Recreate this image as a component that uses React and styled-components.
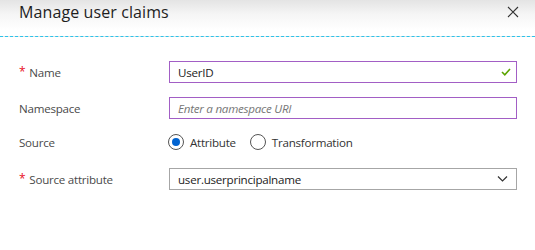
import React from "react";
import styled, { createGlobalStyle } from "styled-components";

const Global = createGlobalStyle`
  html, body { margin: 0; padding: 0; background: #fff; }
  body { font-family: "Open Sans", "Noto Sans", sans-serif; color: #333; }
`;

const Page = styled.div`
  width: 535px;
  height: 250px;
  background: #fff;
  overflow: hidden;
`;

const Header = styled.div`
  height: 37px;
  display: flex;
  align-items: flex-start;
  justify-content: space-between;
  padding: 0 16px 0 19px;
  box-sizing: border-box;
  background: linear-gradient(to bottom, #e4e4e4 0px, #f5f5f5 14px, #ffffff 30px);
  border-bottom: 1px dashed #2cc3ea;
`;

const Title = styled.h1`
  margin: 0;
  padding-top: 1px;
  font-size: 16px;
  font-weight: 400;
  color: #1e1e1e;
  line-height: 22px;
  letter-spacing: 0.1px;
`;

const Close = styled.button`
  border: 0;
  background: none;
  padding: 0;
  margin-top: 6px;
  width: 12px;
  height: 12px;
  display: flex;
  cursor: pointer;
`;

const Form = styled.div`
  display: flex;
  flex-direction: column;
  padding-left: 19px;
  padding-right: 18px;
`;

const Row = styled.div`
  display: grid;
  grid-template-columns: 150px 1fr;
  align-items: center;
  height: 22px;
  margin-top: ${(p) => p.$mt}px;
`;

const Label = styled.label`
  font-size: 11.6px;
  letter-spacing: -0.25px;
  color: #4a4a4a;
  display: flex;
  align-items: center;
  gap: 4px;
`;

const Star = styled.span`
  color: #e81123;
  font-size: 12px;
  position: relative;
  top: -1px;
`;

const Field = styled.div`
  position: relative;
  height: 22px;
  box-sizing: border-box;
  border: 1px solid ${(p) => (p.$gray ? "#a6a6a6" : "#a25ec5")};
  display: flex;
  align-items: center;
  padding: 0 8px;
  font-size: 11.6px;
  letter-spacing: -0.25px;
  color: #222;
`;

const Placeholder = styled.span`
  font-style: italic;
  color: #767676;
`;

const Trail = styled.span`
  position: absolute;
  right: ${(p) => p.$r}px;
  top: 50%;
  transform: translateY(-50%);
  display: flex;
`;

const Radios = styled.div`
  display: flex;
  align-items: center;
  gap: 14px;
  margin-left: -1px;
`;

const RadioOpt = styled.div`
  display: flex;
  align-items: center;
  gap: 6px;
  font-size: 11.6px;
  letter-spacing: -0.25px;
  color: #333;
`;

const Circle = styled.span`
  width: 14px;
  height: 14px;
  border-radius: 50%;
  border: 1px solid #555;
  display: flex;
  align-items: center;
  justify-content: center;
  background: #fff;
  &::after {
    content: "";
    width: 8px;
    height: 8px;
    border-radius: 50%;
    background: ${(p) => (p.$on ? "#0063d1" : "transparent")};
  }
`;

export default function App() {
  return (
    <Page>
      <Global />
      <Header>
        <Title>Manage user claims</Title>
        <Close aria-label="Close">
          <svg width="12" height="12" viewBox="0 0 12 12">
            <path d="M1 1L11 11M11 1L1 11" stroke="#333" strokeWidth="1.1" />
          </svg>
        </Close>
      </Header>
      <Form>
        <Row $mt={24}>
          <Label>
            <Star>*</Star>Name
          </Label>
          <Field>
            UserID
            <Trail $r={5}>
              <svg width="10" height="8" viewBox="0 0 10 8">
                <path d="M1 4L3.8 6.8L9 1" stroke="#5ba400" strokeWidth="1.6" fill="none" />
              </svg>
            </Trail>
          </Field>
        </Row>
        <Row $mt={14}>
          <Label>Namespace</Label>
          <Field>
            <Placeholder>Enter a namespace URI</Placeholder>
          </Field>
        </Row>
        <Row $mt={12}>
          <Label>Source</Label>
          <Radios>
            <RadioOpt>
              <Circle $on />
              Attribute
            </RadioOpt>
            <RadioOpt>
              <Circle />
              Transformation
            </RadioOpt>
          </Radios>
        </Row>
        <Row $mt={15}>
          <Label>
            <Star>*</Star>Source attribute
          </Label>
          <Field $gray>
            user.userprincipalname
            <Trail $r={8}>
              <svg width="11" height="7" viewBox="0 0 11 7">
                <path d="M1 1L5.5 5.5L10 1" stroke="#333" strokeWidth="1.2" fill="none" />
              </svg>
            </Trail>
          </Field>
        </Row>
      </Form>
    </Page>
  );
}
